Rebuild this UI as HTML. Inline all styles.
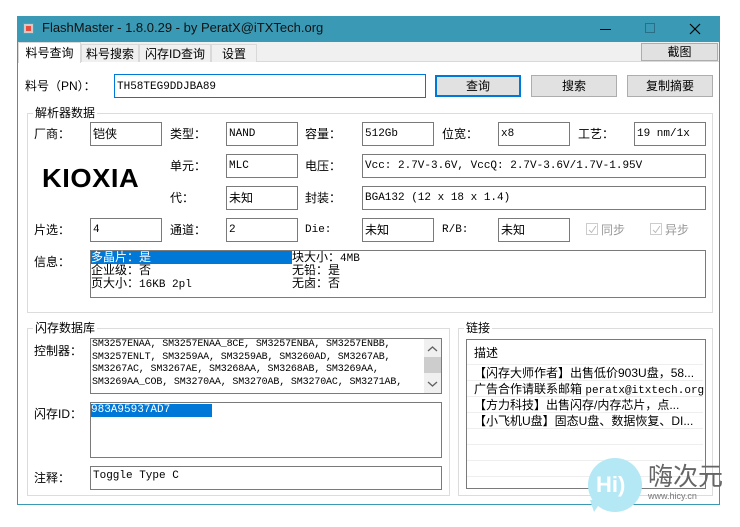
<!DOCTYPE html>
<html><head><meta charset="utf-8"><style>
*{margin:0;padding:0;box-sizing:border-box}
body{width:740px;height:527px;background:#fff;position:relative;overflow:hidden;font-family:"Liberation Sans","Noto Sans CJK SC",sans-serif;font-size:12px;color:#000}
.a{position:absolute}
.win{left:17px;top:16px;width:703px;height:489px;border:1px solid #3a9ab5;background:#fff}
.title{left:17px;top:16px;width:703px;height:26px;background:#3a9ab5}
.f{position:absolute;border:1px solid #7a7a7a;background:#fff;font-family:"Liberation Mono","Noto Sans CJK SC",monospace;font-size:11px;padding:3px 0 0 2px;white-space:nowrap;overflow:hidden;line-height:16px}
.l{position:absolute;font-size:12px;white-space:nowrap;line-height:16px}
.g{position:absolute;border:1px solid #dcdcdc}
.gt{position:absolute;background:#fff;padding:0 2px;font-size:12px}
.btn{position:absolute;background:#e1e1e1;border:1px solid #adadad;text-align:center;font-size:12px;line-height:20px}
.tab{position:absolute;border:1px solid #d9d9d9;border-bottom:none;background:#f0f0f0;text-align:center;font-size:12px;line-height:18px}
.mono{font-family:"Liberation Mono","Noto Sans CJK SC",monospace;font-size:11px}
</style></head><body>
<div class="a win"></div>
<div class="a title"></div>
<div class="a" style="left:23px;top:23px;width:11px;height:11px;background:#ccc;border:1px solid #888"><div style="margin:2px;width:5px;height:5px;background:#e74c3c"></div></div>
<div class="l" style="left:42px;top:20px;font-size:13px;color:#111">FlashMaster - 1.8.0.29 - by PeratX@iTXTech.org</div>
<div class="a" style="left:600px;top:29px;width:11px;height:1px;background:#000"></div>
<div class="a" style="left:645px;top:23px;width:10px;height:10px;border:1px solid #2a6f85"></div>
<svg class="a" style="left:689px;top:23px" width="12" height="12"><path d="M1 1L11 11M11 1L1 11" stroke="#000" stroke-width="1.2"/></svg>
<div class="a" style="left:18px;top:42px;width:701px;height:20px;background:#f0f0f0;border-bottom:1px solid #d9d9d9"></div>
<div class="tab" style="left:18px;top:42px;width:63px;height:21px;background:#fff;line-height:20px">料号查询</div>
<div class="tab" style="left:81px;top:44px;width:58px;height:18px">料号搜索</div>
<div class="tab" style="left:139px;top:44px;width:72px;height:18px">闪存ID查询</div>
<div class="tab" style="left:211px;top:44px;width:46px;height:18px">设置</div>
<div class="btn" style="left:641px;top:43px;width:77px;height:18px;line-height:16px">截图</div>

<div class="l" style="left:25px;top:78px">料号（PN）：</div>
<div class="f" style="left:114px;top:74px;width:312px;height:24px;border-color:#0078d7;padding-top:4px">TH58TEG9DDJBA89</div>
<div class="btn" style="left:435px;top:75px;width:86px;height:22px;border:2px solid #0078d7;line-height:18px">查询</div>
<div class="btn" style="left:531px;top:75px;width:86px;height:22px">搜索</div>
<div class="btn" style="left:627px;top:75px;width:86px;height:22px">复制摘要</div>

<div class="g" style="left:27px;top:113px;width:686px;height:200px"></div>
<div class="gt" style="left:33px;top:104px">解析器数据</div>

<div class="l" style="left:34px;top:126px">厂商：</div>
<div class="f" style="left:90px;top:122px;width:72px;height:24px;font-family:'Noto Sans CJK SC',sans-serif;font-size:12px">铠侠</div>
<div class="l" style="left:170px;top:126px">类型：</div>
<div class="f" style="left:226px;top:122px;width:72px;height:24px">NAND</div>
<div class="l" style="left:305px;top:126px">容量：</div>
<div class="f" style="left:362px;top:122px;width:72px;height:24px">512Gb</div>
<div class="l" style="left:442px;top:126px">位宽：</div>
<div class="f" style="left:498px;top:122px;width:72px;height:24px">x8</div>
<div class="l" style="left:578px;top:126px">工艺：</div>
<div class="f" style="left:634px;top:122px;width:72px;height:24px">19 nm/1x</div>

<div class="a" style="left:42px;top:163px;font-weight:bold;font-size:26px;font-family:'Liberation Sans',sans-serif;transform:scaleX(1.05);transform-origin:left;letter-spacing:0.5px;line-height:30px">KIOXIA</div>
<div class="l" style="left:170px;top:158px">单元：</div>
<div class="f" style="left:226px;top:154px;width:72px;height:24px">MLC</div>
<div class="l" style="left:305px;top:158px">电压：</div>
<div class="f" style="left:362px;top:154px;width:344px;height:24px">Vcc: 2.7V-3.6V, VccQ: 2.7V-3.6V/1.7V-1.95V</div>
<div class="l" style="left:170px;top:190px">代：</div>
<div class="f" style="left:226px;top:186px;width:72px;height:24px;font-family:'Noto Sans CJK SC',sans-serif;font-size:12px">未知</div>
<div class="l" style="left:305px;top:190px">封装：</div>
<div class="f" style="left:362px;top:186px;width:344px;height:24px">BGA132 (12 x 18 x 1.4)</div>

<div class="l" style="left:34px;top:222px">片选：</div>
<div class="f" style="left:90px;top:218px;width:72px;height:24px">4</div>
<div class="l" style="left:170px;top:222px">通道：</div>
<div class="f" style="left:226px;top:218px;width:72px;height:24px">2</div>
<div class="l mono" style="left:305px;top:222px">Die:</div>
<div class="f" style="left:362px;top:218px;width:72px;height:24px;font-family:'Noto Sans CJK SC',sans-serif;font-size:12px">未知</div>
<div class="l mono" style="left:442px;top:222px">R/B:</div>
<div class="f" style="left:498px;top:218px;width:72px;height:24px;font-family:'Noto Sans CJK SC',sans-serif;font-size:12px">未知</div>
<div class="a" style="left:586px;top:223px;width:12px;height:12px;border:1px solid #ccc"></div>
<svg class="a" style="left:587px;top:224px" width="11" height="11"><path d="M2 6L4.5 8.5L9 2" stroke="#bbb" fill="none"/></svg>
<div class="l" style="left:601px;top:222px;color:#999">同步</div>
<div class="a" style="left:650px;top:223px;width:12px;height:12px;border:1px solid #ccc"></div>
<svg class="a" style="left:651px;top:224px" width="11" height="11"><path d="M2 6L4.5 8.5L9 2" stroke="#bbb" fill="none"/></svg>
<div class="l" style="left:665px;top:222px;color:#999">异步</div>

<div class="l" style="left:34px;top:254px">信息：</div>
<div class="a" style="left:90px;top:250px;width:616px;height:48px;border:1px solid #7a7a7a"></div>
<div class="a" style="left:91px;top:251px;width:201px;height:13px;background:#0078d7"></div>
<div class="l" style="left:91px;top:251px;line-height:13px;color:#fff">多晶片：是</div>
<div class="l" style="left:91px;top:264px;line-height:13px">企业级：否</div>
<div class="l" style="left:91px;top:277px;line-height:13px">页大小：<span class="mono">16KB 2pl</span></div>
<div class="l" style="left:292px;top:251px;line-height:13px">块大小：<span class="mono">4MB</span></div>
<div class="l" style="left:292px;top:264px;line-height:13px">无铅：是</div>
<div class="l" style="left:292px;top:277px;line-height:13px">无卤：否</div>

<div class="g" style="left:27px;top:328px;width:423px;height:168px"></div>
<div class="gt" style="left:33px;top:319px">闪存数据库</div>
<div class="l" style="left:34px;top:343px">控制器：</div>
<div class="a mono" style="left:90px;top:338px;width:352px;height:56px;border:1px solid #7a7a7a;line-height:12.5px;padding-left:1px;white-space:nowrap;overflow:hidden;font-size:10px;letter-spacing:-0.15px">SM3257ENAA, SM3257ENAA_8CE, SM3257ENBA, SM3257ENBB,<br>SM3257ENLT, SM3259AA, SM3259AB, SM3260AD, SM3267AB,<br>SM3267AC, SM3267AE, SM3268AA, SM3268AB, SM3269AA,<br>SM3269AA_COB, SM3270AA, SM3270AB, SM3270AC, SM3271AB,</div>
<div class="a" style="left:424px;top:339px;width:17px;height:54px;background:#f0f0f0"></div>
<div class="a" style="left:424px;top:357px;width:17px;height:16px;background:#cdcdcd"></div>
<svg class="a" style="left:427px;top:345px" width="11" height="8"><path d="M1 6L5.5 2L10 6" stroke="#606060" fill="none" stroke-width="1.3"/></svg>
<svg class="a" style="left:427px;top:380px" width="11" height="8"><path d="M1 2L5.5 6L10 2" stroke="#606060" fill="none" stroke-width="1.3"/></svg>
<div class="l" style="left:34px;top:406px">闪存ID：</div>
<div class="a" style="left:90px;top:402px;width:352px;height:56px;border:1px solid #7a7a7a"></div>
<div class="a mono" style="left:91px;top:404px;width:121px;height:13px;background:#0078d7;color:#fff;line-height:13px">983A95937AD7</div>
<div class="l" style="left:34px;top:470px">注释：</div>
<div class="f" style="left:90px;top:466px;width:352px;height:24px;padding-top:1px">Toggle Type C</div>

<div class="g" style="left:458px;top:328px;width:255px;height:168px"></div>
<div class="gt" style="left:464px;top:319px">链接</div>
<div class="a" style="left:466px;top:339px;width:240px;height:150px;border:1px solid #7a7a7a"></div>
<div class="a" style="left:467px;top:364px;width:236px;height:1px;background:#eee"></div>
<div class="a" style="left:467px;top:380px;width:236px;height:1px;background:#eee"></div>
<div class="a" style="left:467px;top:396px;width:236px;height:1px;background:#eee"></div>
<div class="a" style="left:467px;top:412px;width:236px;height:1px;background:#eee"></div>
<div class="a" style="left:467px;top:428px;width:236px;height:1px;background:#eee"></div>
<div class="a" style="left:467px;top:444px;width:236px;height:1px;background:#eee"></div>
<div class="a" style="left:467px;top:460px;width:236px;height:1px;background:#eee"></div>
<div class="a" style="left:467px;top:476px;width:236px;height:1px;background:#eee"></div>
<div class="l" style="left:474px;top:345px">描述</div>
<div class="l" style="left:474px;top:365px">【闪存大师作者】出售低价903U盘，58...</div>
<div class="l" style="left:474px;top:381px">广告合作请联系邮箱 <span class="mono">peratx@itxtech.org</span></div>
<div class="l" style="left:474px;top:397px">【方力科技】出售闪存/内存芯片，点...</div>
<div class="l" style="left:474px;top:413px">【小飞机U盘】固态U盘、数据恢复、DI...</div>

<div class="a" style="left:588px;top:458px;width:54px;height:54px;border-radius:50%;background:#b5e8f5"></div>
<div class="a" style="left:590px;top:500px;width:0;height:0;border-left:4px solid transparent;border-right:8px solid transparent;border-top:12px solid #b5e8f5"></div>
<div class="l" style="left:596px;top:474px;font-size:22px;font-weight:bold;color:#fff;line-height:22px">Hi)</div>
<div class="l" style="left:648px;top:463px;font-size:25px;color:#666;line-height:28px">嗨次元</div>
<div class="l" style="left:648px;top:491px;font-size:9px;color:#777;line-height:10px">www.hicy.cn</div>
</body></html>
